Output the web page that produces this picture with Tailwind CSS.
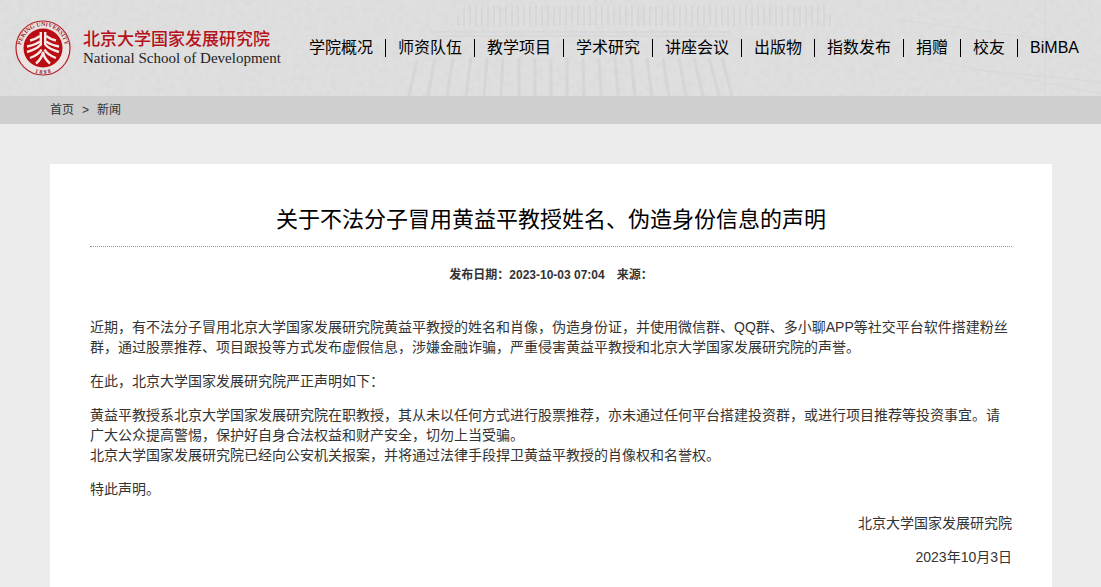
<!DOCTYPE html>
<html lang="zh-CN">
<head>
    <meta charset="UTF-8">
    <meta name="viewport" content="width=device-width, initial-scale=1.0">
    <title>关于不法分子冒用黄益平教授姓名、伪造身份信息的声明</title>
    <script src="https://cdn.jsdelivr.net/npm/@tailwindcss/browser@4"></script>
</head>
<body class="bg-[#ececec] font-['Liberation_Sans','Noto_Sans_CJK_SC',sans-serif] text-[#333]">
<!-- 页头 -->
<header class="relative h-24 overflow-hidden bg-[#dfdfdf]">
    <!-- 背景纹理 -->
    <svg class="absolute inset-0 h-full w-full" aria-hidden="true" viewBox="0 0 1101 96" preserveAspectRatio="xMidYMid slice">
        <defs>
            <filter id="grain" x="0" y="0" width="100%" height="100%">
                <feTurbulence type="fractalNoise" baseFrequency="0.16" numOctaves="3" seed="4"/>
                <feColorMatrix values="0 0 0 0 0.6  0 0 0 0 0.6  0 0 0 0 0.6  0.5 0 0 0 -0.19"/>
            </filter>
            <pattern id="eaves" width="6" height="30" patternUnits="userSpaceOnUse">
                <path d="M2 0v30" stroke="#cfcfcf" stroke-width="2"/>
            </pattern>
        </defs>
        <rect width="1101" height="96" filter="url(#grain)"/>
        <path d="M465 6h360l12 20H450z" fill="url(#eaves)" opacity=".5"/>
        <path d="M430 32h300M436 36h290" stroke="#d3d3d3" fill="none"/>
        <path d="M417 60l-8 36M435 58l-7 38M453 58l-6 38M471 58l-5 38M487 58l-3 38M503 58l-2 38M519 58v38M535 58v38M551 58v38M567 58v38M583 58l1 38M599 58l2 38M615 58l3 38M631 58l4 38M647 58l5 38M663 58l6 38M679 58l7 38M694 58l9 38M709 58l10 38M722 58l10 38"
              stroke="#cdcdcd" stroke-width="3" opacity=".5" fill="none"/>
        <path d="M930 60l171 34M900 20l150 20M1045 0v96M980 70l121 12" stroke="#d8d8d8" fill="none"/>
    </svg>
    <div class="relative flex h-full items-center justify-between pl-[15px] pr-[22px]">
        <!-- 校徽与院名 -->
        <a href="#" class="flex shrink-0 items-center gap-3">
            <svg class="size-14" viewBox="0 0 56 56" role="img" aria-label="Peking University 1898">
                <defs>
                    <path id="ringTop" d="M8.600 38.500a22 22 0 1 1 38.800 0"/>
                    <path id="ringBottom" d="M12 48.500a26 26 0 0 0 32 0"/>
                </defs>
                <circle cx="28" cy="28" r="27" fill="#ebe3e1" stroke="#b5222a" stroke-width="1.2"/>
                <circle cx="28" cy="28" r="19.500" fill="#b80c12"/>
                <g class="font-['Liberation_Serif',serif] text-[6px] font-bold" fill="#9c2a2e">
                    <text text-anchor="middle"><textPath href="#ringTop" startOffset="50%">PEKING UNIVERSITY</textPath></text>
                    <text text-anchor="middle"><textPath href="#ringBottom" startOffset="50%">1 8 9 8</textPath></text>
                </g>
                <g fill="none" stroke="#f5eae7" stroke-width="2.4">
                    <path d="M25.800 12v12.500Q22 29 12 32M30.200 12v12.500Q34 29 44 32"/>
                    <path d="M15 20.500Q21 19 25 16M41 20.500Q35 19 31 16"/>
                    <path d="M12 26.500Q20 25 25 21.500M44 26.500Q36 25 31 21.500"/>
                    <path d="M15 38Q24 34.500 26.500 29.500M41 38Q32 34.500 29.500 29.500"/>
                    <path d="M21 43.500Q27 38.500 28 32Q29 38.500 35 43.500"/>
                </g>
            </svg>
            <span class="flex flex-col">
                <span class="text-[17px] leading-5 font-medium text-[#b5121b]">北京大学国家发展研究院</span>
                <span class="font-['Liberation_Serif',serif] text-[15px] leading-4 text-[#222]">National School of Development</span>
            </span>
        </a>
        <!-- 主导航 -->
        <nav class="flex items-center divide-x divide-black text-base leading-[18px] whitespace-nowrap text-black">
            <a href="#" class="px-3">学院概况</a>
            <a href="#" class="px-3">师资队伍</a>
            <a href="#" class="px-3">教学项目</a>
            <a href="#" class="px-3">学术研究</a>
            <a href="#" class="px-3">讲座会议</a>
            <a href="#" class="px-3">出版物</a>
            <a href="#" class="px-3">指数发布</a>
            <a href="#" class="px-3">捐赠</a>
            <a href="#" class="px-3">校友</a>
            <a href="#" class="pl-3">BiMBA</a>
        </nav>
    </div>
</header>

<!-- 面包屑 -->
<div class="flex h-7 items-center gap-2 bg-[#cfcfcf] px-[50px] text-xs">
    <a href="#">首页</a>
    <span>&gt;</span>
    <a href="#">新闻</a>
</div>

<!-- 正文 -->
<main class="mr-[49px] ml-[50px] mt-10 bg-white px-10 pt-10 pb-10">
    <h1 class="border-b border-dotted border-[#999] pb-2.5 text-center text-[22px] leading-8 text-black">关于不法分子冒用黄益平教授姓名、伪造身份信息的声明</h1>
    <div class="mt-4 flex justify-center gap-3 text-xs leading-6 font-bold">
        <span>发布日期：2023-10-03 07:04</span>
        <span>来源：</span>
    </div>
    <article class="mt-[30px] space-y-3.5 text-sm leading-5">
        <p>近期，有不法分子冒用北京大学国家发展研究院黄益平教授的姓名和肖像，伪造身份证，并使用微信群、QQ群、多小聊APP等社交平台软件搭建粉丝群，通过股票推荐、项目跟投等方式发布虚假信息，涉嫌金融诈骗，严重侵害黄益平教授和北京大学国家发展研究院的声誉。</p>
        <p>在此，北京大学国家发展研究院严正声明如下：</p>
        <p>黄益平教授系北京大学国家发展研究院在职教授，其从未以任何方式进行股票推荐，亦未通过任何平台搭建投资群，或进行项目推荐等投资事宜。请广大公众提高警惕，保护好自身合法权益和财产安全，切勿上当受骗。<br>北京大学国家发展研究院已经向公安机关报案，并将通过法律手段捍卫黄益平教授的肖像权和名誉权。</p>
        <p>特此声明。</p>
        <p class="text-right">北京大学国家发展研究院</p>
        <p class="text-right">2023年10月3日</p>
    </article>
</main>
</body>
</html>
